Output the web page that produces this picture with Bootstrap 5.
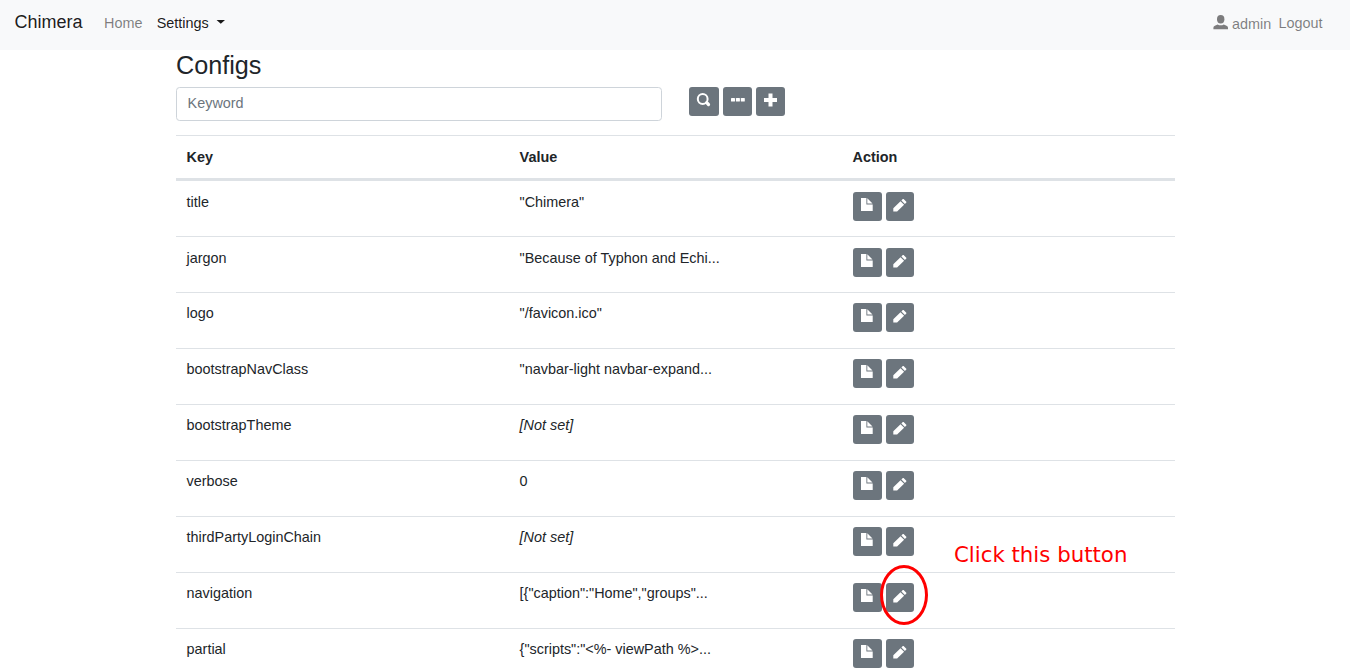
<!DOCTYPE html>
<html lang="en">
<head>
<meta charset="utf-8">
<meta name="viewport" content="width=device-width, initial-scale=1">
<title>Chimera</title>
<link href="https://cdn.jsdelivr.net/npm/bootstrap@5.3.0/dist/css/bootstrap.min.css" rel="stylesheet">
<style>
html { font-size: 14.4px; }
body { font-family: "Liberation Sans", Arial, sans-serif; color: #212529; height: 672px; overflow: hidden; }
.topbar { height: 50px; padding: 0 16.8px 0 14.4px; background: #f8f9fa; }
.topbar .navbar-brand { font-size: 18px; line-height: 27px; margin-right: 14.4px; padding: 0; margin-top: -5px; color: rgba(0,0,0,.9); }
.topbar .nav-link { padding: 0 7.2px; line-height: 22px; margin-top: -5px; color: rgba(0,0,0,.5); }
.topbar .nav-link.active { color: rgba(0,0,0,.9); }
.topbar .dropdown-toggle::after { margin-left: 7.5px; border-top: 4px solid; border-left: 4.500px solid transparent; border-right: 4.500px solid transparent; width: 9px; height: 4px; border: 0; background: currentColor; clip-path: polygon(0 0, 100% 0, 50% 100%); }
.page { width: 1026px; padding: 0 13.5px; }
.page h3 { font-size: 25.2px; line-height: 30px; margin: 0 0 7px .5px; font-weight: 400; }
.keyword { width: 486px; height: 34px; padding: 0 11.1px 2px; border-color: #ced4da; border-radius: 3.6px; }
.keyword::placeholder { color: #6c757d; }
.tool { width: 29px; height: 29px; padding: 0; border: 0; border-radius: 3px; background: #6c757d; flex: none; }
.tool svg { display: block; fill: #fff; }
.tool-wide { width: 30px; }
.tool-slim { width: 28px; }
.config { margin: 14px 0 0; table-layout: fixed; border-collapse: separate; border-spacing: 0; color: #212529; }
.config th, .config td { padding: 0 11.1px; border: 0; border-top: 1px solid #dee2e6; }
.config th { height: 46px; padding-top: 2px; vertical-align: middle; }
.config thead th { border-bottom: 3px solid #dee2e6; }
.config tbody td { height: 56px; padding-top: 10px; line-height: 20px; }
.config tbody tr:first-child td { border-top: 0; height: 55px; }
.config tbody tr:nth-child(1) td, .config tbody tr:nth-child(2) td { padding-top: 11px; }
.note-ring { position: absolute; left: 880px; top: 565px; width: 48px; height: 60px; border: 3px solid #f00; border-radius: 50%; }
.note-text { position: absolute; left: 954px; top: 542px; font: 21.3px/26px "DejaVu Sans", sans-serif; color: #f00; white-space: nowrap; }
</style>
</head>
<body>
<svg class="d-none">
  <symbol id="i-file" viewBox="0 0 29 29"><path d="M8 6h5.400v6.500h6.300V19H8zM14.300 6.300l5.200 5.200h-5.200z"/></symbol>
  <symbol id="i-pencil" viewBox="0 0 28 29"><path d="M7.300 19.500v-3.300l7.200-6.900 3.600 3.500-7 6.700zM15.400 8.500l1.400-1.400q.4-.4.800 0l2.700 2.700q.4.400 0 .8L18.900 12z"/></symbol>
</svg>
<nav class="topbar d-flex align-items-center">
  <a class="navbar-brand" href="#">Chimera</a>
  <a class="nav-link" href="#">Home</a>
  <a class="nav-link dropdown-toggle active" href="#">Settings</a>
  <a class="nav-link ms-auto d-flex pe-0" href="#"><svg width="19" height="22" viewBox="0 0 19 22" fill="#7c7c7d"><ellipse cx="7.700" cy="7.300" rx="3.700" ry="4.200"/><path d="M.4 17.200v-1.500q0-1.500 1.500-2l2.700-1.200q3.100 1.700 6.200 0l2.700 1.200q1.500.5 1.500 2v1.500z"/></svg><span class="position-relative" style="top:1px">admin</span></a>
  <a class="nav-link me-1" href="#">Logout</a>
</nav>
<main class="page mx-auto">
  <h3>Configs</h3>
  <div class="d-flex">
    <input class="form-control keyword" placeholder="Keyword" aria-label="Keyword">
    <div class="d-flex" style="margin-left:27px;gap:4px">
      <button class="btn tool tool-wide" aria-label="Search"><svg width="30" height="29" viewBox="0 0 30 29"><circle cx="13.700" cy="12" r="4.900" style="fill:none;stroke:#fff;stroke-width:2"/><path d="M17.700 15.700l1.800 1.800" style="stroke:#fff;stroke-width:3.200;stroke-linecap:round"/></svg></button>
      <button class="btn tool" aria-label="More"><svg width="29" height="29"><rect x="8" y="11" width="4" height="3.600" rx=".6"/><rect x="12.900" y="11" width="4" height="3.600" rx=".6"/><rect x="17.800" y="11" width="4" height="3.600" rx=".6"/></svg></button>
      <button class="btn tool" aria-label="Add"><svg width="29" height="29"><path d="M12.500 6.500h4v4.500H21v4h-4.500v4.400h-4V15H8v-4h4.500z"/></svg></button>
    </div>
  </div>
  <table class="table config">
    <thead><tr><th>Key</th><th>Value</th><th>Action</th></tr></thead>
    <tbody id="rows"></tbody>
  </table>
</main>
<div class="note-ring"></div>
<div class="note-text">Click this button</div>
<script src="https://cdn.jsdelivr.net/npm/bootstrap@5.3.0/dist/js/bootstrap.bundle.min.js"></script>
<script>
const configs = [
  ['title', '"Chimera"'],
  ['jargon', '"Because of Typhon and Echi...'],
  ['logo', '"/favicon.ico"'],
  ['bootstrapNavClass', '"navbar-light navbar-expand...'],
  ['bootstrapTheme', null],
  ['verbose', '0'],
  ['thirdPartyLoginChain', null],
  ['navigation', '[{"caption":"Home","groups"...'],
  ['partial', '{"scripts":"<%- viewPath %>...']
];
const body = document.getElementById('rows');
for (const [key, value] of configs) {
  const row = body.insertRow();
  row.insertCell().textContent = key;
  const cell = row.insertCell();
  if (value === null) cell.innerHTML = '<i>[Not set]</i>';
  else cell.textContent = value;
  row.insertCell().innerHTML = '<div class="d-flex" style="gap:4px">' +
    '<button class="btn tool" aria-label="View"><svg width="29" height="29"><use href="#i-file"/></svg></button>' +
    '<button class="btn tool tool-slim" aria-label="Edit"><svg width="28" height="29"><use href="#i-pencil"/></svg></button></div>';
}
</script>
</body>
</html>
